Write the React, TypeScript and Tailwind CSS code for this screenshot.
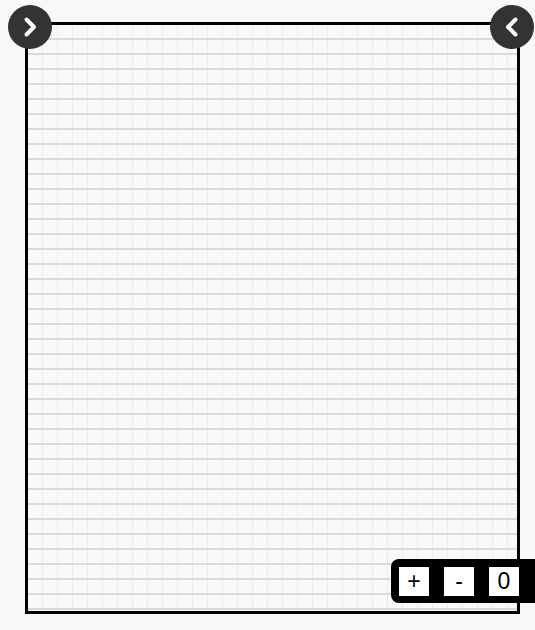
import React from 'react'

function Chevron({ dir }: { dir: 'left' | 'right' }) {
  return (
    <svg width="24" height="24" viewBox="0 0 24 24" fill="none">
      <path
        d={dir === 'right' ? 'M8.5 4.5 L16 12 L8.5 19.5' : 'M15.5 4.5 L8 12 L15.5 19.5'}
        stroke="white"
        strokeWidth="4"
        strokeLinecap="round"
        strokeLinejoin="round"
      />
    </svg>
  )
}

export default function App() {
  return (
    <div className="relative w-[535px] h-[630px] overflow-hidden bg-[#f8f8f8]" style={{ fontFamily: "'Liberation Sans', Arial, sans-serif" }}>
      {/* Grid sheet */}
      <div
        className="ml-[25px] mt-[22px] w-[495px] h-[592px] border-[3px] border-black bg-[#f9f9f9] bg-[linear-gradient(to_bottom,transparent_13px,#dadada_13px,#dadada_15px),linear-gradient(to_right,transparent_14px,#ebebeb_14px,#ebebeb_15px)] bg-[size:15px_15px]"
      />

      {/* Side toggles */}
      <button className="absolute left-[8px] top-[5px] w-[44px] h-[44px] rounded-full bg-[#333333] flex items-center justify-center">
        <Chevron dir="right" />
      </button>
      <button className="absolute left-[490px] top-[5px] w-[44px] h-[44px] rounded-full bg-[#333333] flex items-center justify-center">
        <Chevron dir="left" />
      </button>

      {/* Zoom controls */}
      <div className="absolute left-[391px] top-[559px] w-[160px] h-[44px] rounded-[8px] bg-black flex items-center pl-[8px] gap-[15px]">
        {['+', '-', '0'].map((t) => (
          <div key={t} className="w-[30px] h-[29px] bg-white flex items-center justify-center text-[23px] leading-none text-black">
            {t}
          </div>
        ))}
      </div>
    </div>
  )
}
